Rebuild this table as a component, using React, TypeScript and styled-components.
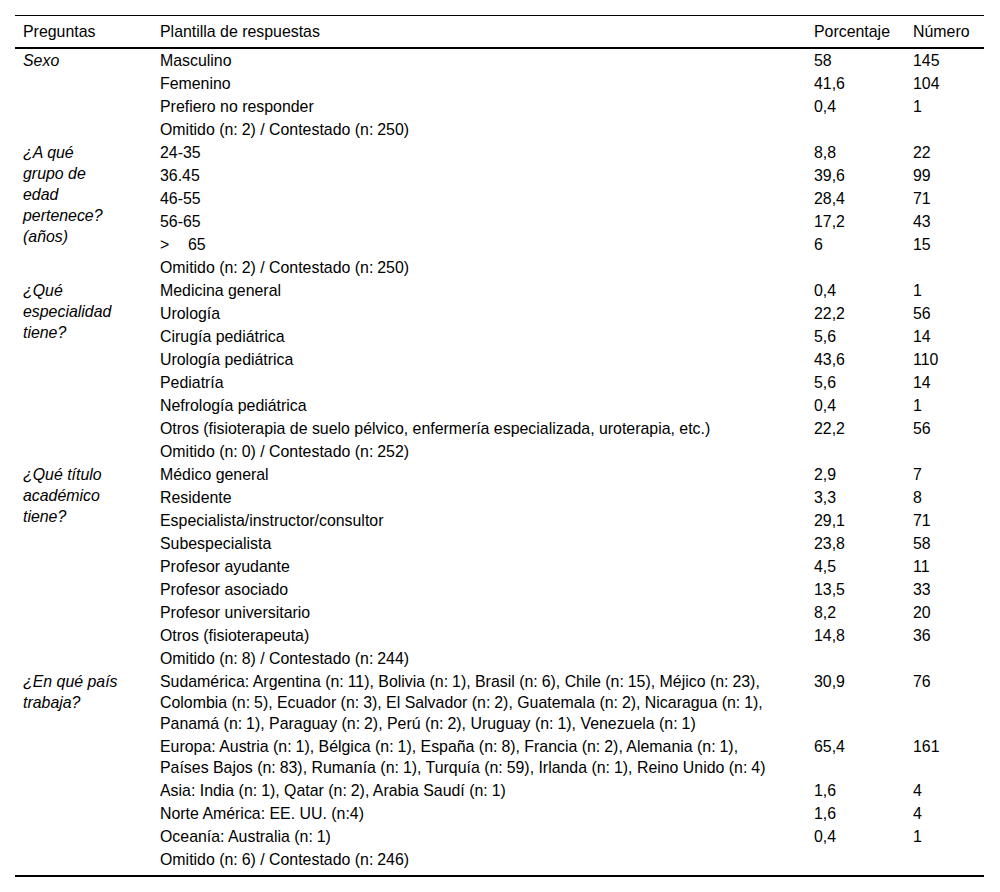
import React from "react";
import styled, { createGlobalStyle } from "styled-components";

const GlobalStyle = createGlobalStyle`
  html, body {
    margin: 0;
    padding: 0;
    background: #fff;
  }
  body {
    font-family: "Liberation Sans", Arial, sans-serif;
    color: #000;
  }
`;

type Row = { answer: string[]; pct?: string; num?: string };
type Section = { question: string[]; rows: Row[] };

// narrow space used after "n:" in the source
const T = "\u2005";
const omit = (a: number, b: number) => `Omitido (n:${T}${a}) / Contestado (n:${T}${b})`;

const sections: Section[] = [
  {
    question: ["Sexo"],
    rows: [
      { answer: ["Masculino"], pct: "58", num: "145" },
      { answer: ["Femenino"], pct: "41,6", num: "104" },
      { answer: ["Prefiero no responder"], pct: "0,4", num: "1" },
      { answer: [omit(2, 250)] },
    ],
  },
  {
    question: ["¿A qué", "grupo de", "edad", "pertenece?", "(años)"],
    rows: [
      { answer: ["24-35"], pct: "8,8", num: "22" },
      { answer: ["36.45"], pct: "39,6", num: "99" },
      { answer: ["46-55"], pct: "28,4", num: "71" },
      { answer: ["56-65"], pct: "17,2", num: "43" },
      { answer: [">65"], pct: "6", num: "15" },
      { answer: [omit(2, 250)] },
    ],
  },
  {
    question: ["¿Qué", "especialidad", "tiene?"],
    rows: [
      { answer: ["Medicina general"], pct: "0,4", num: "1" },
      { answer: ["Urología"], pct: "22,2", num: "56" },
      { answer: ["Cirugía pediátrica"], pct: "5,6", num: "14" },
      { answer: ["Urología pediátrica"], pct: "43,6", num: "110" },
      { answer: ["Pediatría"], pct: "5,6", num: "14" },
      { answer: ["Nefrología pediátrica"], pct: "0,4", num: "1" },
      {
        answer: ["Otros (fisioterapia de suelo pélvico, enfermería especializada, uroterapia, etc.)"],
        pct: "22,2",
        num: "56",
      },
      { answer: [omit(0, 252)] },
    ],
  },
  {
    question: ["¿Qué título", "académico", "tiene?"],
    rows: [
      { answer: ["Médico general"], pct: "2,9", num: "7" },
      { answer: ["Residente"], pct: "3,3", num: "8" },
      { answer: ["Especialista/instructor/consultor"], pct: "29,1", num: "71" },
      { answer: ["Subespecialista"], pct: "23,8", num: "58" },
      { answer: ["Profesor ayudante"], pct: "4,5", num: "11" },
      { answer: ["Profesor asociado"], pct: "13,5", num: "33" },
      { answer: ["Profesor universitario"], pct: "8,2", num: "20" },
      { answer: ["Otros (fisioterapeuta)"], pct: "14,8", num: "36" },
      { answer: [omit(8, 244)] },
    ],
  },
  {
    question: ["¿En qué país", "trabaja?"],
    rows: [
      {
        answer: [
          `Sudamérica: Argentina (n:${T}11), Bolivia (n:${T}1), Brasil (n:${T}6), Chile (n:${T}15), Méjico (n:${T}23),`,
          `Colombia (n:${T}5), Ecuador (n:${T}3), El Salvador (n:${T}2), Guatemala (n:${T}2), Nicaragua (n:${T}1),`,
          `Panamá (n:${T}1), Paraguay (n:${T}2), Perú (n:${T}2), Uruguay (n:${T}1), Venezuela (n:${T}1)`,
        ],
        pct: "30,9",
        num: "76",
      },
      {
        answer: [
          `Europa: Austria (n:${T}1), Bélgica (n:${T}1), España (n:${T}8), Francia (n:${T}2), Alemania (n:${T}1),`,
          `Países Bajos (n:${T}83), Rumanía (n:${T}1), Turquía (n:${T}59), Irlanda (n:${T}1), Reino Unido (n:${T}4)`,
        ],
        pct: "65,4",
        num: "161",
      },
      { answer: [`Asia: India (n:${T}1), Qatar (n:${T}2), Arabia Saudí (n:${T}1)`], pct: "1,6", num: "4" },
      { answer: ["Norte América: EE. UU. (n:4)"], pct: "1,6", num: "4" },
      { answer: [`Oceanía: Australia (n:${T}1)`], pct: "0,4", num: "1" },
      { answer: [omit(6, 246)] },
    ],
  },
];

const Page = styled.div`
  padding: 15px 16px 0 15px;
`;

const Table = styled.table`
  width: 969px;
  border-collapse: collapse;
  table-layout: fixed;
  font-size: 15.9px;
  line-height: 21px;
  border-top: 1px solid #000;
  border-bottom: 2px solid #000;
`;

const HeadRow = styled.tr`
  border-bottom: 2px solid #000;
`;

const Th = styled.th`
  text-align: left;
  font-weight: normal;
  padding: 5px 8px 5px;
  white-space: nowrap;
`;

const Td = styled.td<{ $last?: boolean }>`
  vertical-align: top;
  text-align: left;
  padding: 1px 8px ${(p) => (p.$last ? "5px" : "1px")};
  white-space: nowrap;
`;

const Question = styled(Td)`
  font-style: italic;
`;

const Gt = styled.span`
  display: inline-block;
  width: 28px;
`;

function Lines({ lines }: { lines: string[] }) {
  return (
    <>
      {lines.map((l, i) => (
        <React.Fragment key={i}>
          {i > 0 && <br />}
          {l === ">65" ? (
            <>
              <Gt>&gt;</Gt>65
            </>
          ) : (
            l
          )}
        </React.Fragment>
      ))}
    </>
  );
}

export default function App() {
  return (
    <Page>
      <GlobalStyle />
      <Table>
        <colgroup>
          <col style={{ width: 137 }} />
          <col style={{ width: 654 }} />
          <col style={{ width: 99 }} />
          <col style={{ width: 79 }} />
        </colgroup>
        <thead>
          <HeadRow>
            <Th>Preguntas</Th>
            <Th>Plantilla de respuestas</Th>
            <Th>Porcentaje</Th>
            <Th>Número</Th>
          </HeadRow>
        </thead>
        <tbody>
          {sections.map((s, si) =>
            s.rows.map((r, ri) => {
              const last = si === sections.length - 1 && ri === s.rows.length - 1;
              return (
                <tr key={`${si}-${ri}`}>
                  {ri === 0 && (
                    <Question rowSpan={s.rows.length}>
                      <Lines lines={s.question} />
                    </Question>
                  )}
                  <Td $last={last}>
                    <Lines lines={r.answer} />
                  </Td>
                  <Td $last={last}>{r.pct}</Td>
                  <Td $last={last}>{r.num}</Td>
                </tr>
              );
            })
          )}
        </tbody>
      </Table>
    </Page>
  );
}
